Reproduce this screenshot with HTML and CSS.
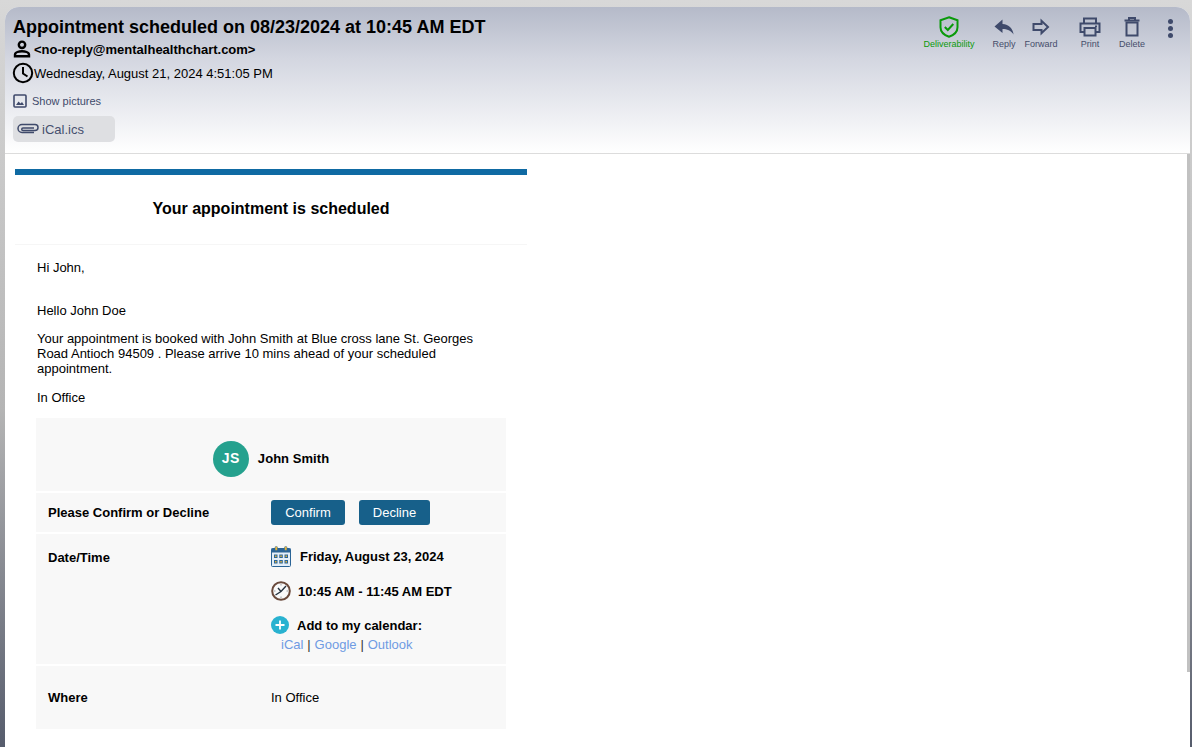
FILE: index.html
```html
<!DOCTYPE html>
<html lang="en">
<head>
<meta charset="utf-8">
<title>Appointment scheduled</title>
<link rel="stylesheet" href="styles.css">
</head>
<body>
<div class="window">
  <header class="head">
    <div class="meta">
      <h1 class="subject">Appointment scheduled on 08/23/2024 at 10:45 AM EDT</h1>
      <div class="sender">
        <svg viewBox="0 0 18 18" width="18" height="18"><circle cx="9" cy="4.800" r="3.200" fill="none" stroke="#000" stroke-width="2.400"/><path d="M2 16.300v-1.600c0-2.500 4.200-3.500 7-3.500s7 1 7 3.500v1.600z" fill="none" stroke="#000" stroke-width="2.400"/></svg>
        <span>&lt;no-reply@mentalhealthchart.com&gt;</span>
      </div>
      <div class="date">
        <svg viewBox="0 0 22 22" width="22" height="22"><circle cx="11" cy="11" r="9.200" fill="none" stroke="#000" stroke-width="2"/><path d="M11 5v6.500l4.500 3" fill="none" stroke="#000" stroke-width="2"/></svg>
        <span>Wednesday, August 21, 2024 4:51:05 PM</span>
      </div>
      <div class="pics">
        <svg viewBox="0 0 14 14" width="14" height="14"><rect x="1" y="1" width="12" height="12" rx="1" fill="none" stroke="#3f4a6b" stroke-width="1.600"/><path d="M3 11l2.500-3.500 2 2 1.500-1.500 2 3z" fill="#3f4a6b"/></svg>
        <span>Show pictures</span>
      </div>
      <div class="attach">
        <svg viewBox="0 0 24 12" width="24" height="12"><path d="M18 9.500H6a3.500 3.500 0 0 1 0-8h13a3 3 0 0 1 0 6H7a1.200 1.200 0 0 1 0-2.500h11" fill="none" stroke="#3f4a6b" stroke-width="1.500"/></svg>
        <span>iCal.ics</span>
      </div>
    </div>
    <nav class="tools">
      <div class="tool tool-deliv">
        <svg viewBox="0 0 20 22" width="20" height="22"><path d="M10 1.200l8.500 3v7c0 4.500-3.500 7.800-8.500 9.600-5-1.800-8.500-5.100-8.500-9.600v-7z" fill="none" stroke="#0a9a0a" stroke-width="2"/><path d="M5.800 11l3 3 5.500-6" fill="none" stroke="#0a9a0a" stroke-width="2"/></svg>
        <span>Deliverability</span>
      </div>
      <div class="tool tool-reply">
        <svg viewBox="0 0 20 16" width="20" height="16"><path d="M8.500 .5L.5 7.500 8.500 14V10c4.500 0 8.500 1.500 11 5.500-.5-6-4.500-10-11-10.500z" fill="#3f4a6b"/></svg>
        <span>Reply</span>
      </div>
      <div class="tool tool-fwd">
        <svg viewBox="0 0 18 16" width="18" height="16"><path d="M1.500 5h8V1.800L16 8l-6.500 6.200V11h-8z" fill="none" stroke="#3f4a6b" stroke-width="2"/></svg>
        <span>Forward</span>
      </div>
      <div class="tool tool-print">
        <svg viewBox="0 0 22 20" width="22" height="20"><path d="M5 6V1.500h12V6M5 15H1.500V6.500h19V15H17" fill="none" stroke="#3f4a6b" stroke-width="2"/><rect x="5.500" y="11" width="11" height="7.500" fill="none" stroke="#3f4a6b" stroke-width="2"/><rect x="16" y="8.500" width="2" height="1.500" fill="#3f4a6b"/></svg>
        <span>Print</span>
      </div>
      <div class="tool tool-del">
        <svg viewBox="0 0 16 20" width="16" height="20"><path d="M0.500 3.500h15M5 3V1h6v2" fill="none" stroke="#3f4a6b" stroke-width="2"/><rect x="2.500" y="5.500" width="11" height="13" fill="none" stroke="#3f4a6b" stroke-width="2"/></svg>
        <span>Delete</span>
      </div>
      <div class="more"><i></i><i></i><i></i></div>
    </nav>
  </header>

  <main class="body">
    <div class="thumb"></div>
    <article class="mail">
      <div class="mail-bar"></div>
      <h2 class="mail-title">Your appointment is scheduled</h2>
      <div class="mail-main">
        <p class="hi">Hi John,</p>
        <p class="hello">Hello John Doe</p>
        <p class="para">Your appointment is booked with John Smith at Blue cross lane St. Georges Road Antioch 94509 . Please arrive 10 mins ahead of your scheduled appointment.</p>
        <p class="kind">In Office</p>
        <div class="card">
          <div class="row row-person">
            <span class="avatar">JS</span>
            <strong class="person">John Smith</strong>
          </div>
          <div class="row row-split row-confirm">
            <strong class="label">Please Confirm or Decline</strong>
            <div class="value btns"><a class="btn btn-a">Confirm</a><a class="btn btn-b">Decline</a></div>
          </div>
          <div class="row row-split row-date">
            <strong class="label">Date/Time</strong>
            <div class="value">
              <div class="line line-day">
                <svg viewBox="0 0 20 21" width="20" height="21"><rect x="0.500" y="2.500" width="19" height="18" rx="1" fill="#e4eef7" stroke="#2a6496"/><rect x="0.500" y="2.500" width="19" height="4" fill="#2a6496"/><rect x="4" y="0.500" width="2.500" height="4" rx="1" fill="#e2b33c" stroke="#2a6496" stroke-width="0.500"/><rect x="13.500" y="0.500" width="2.500" height="4" rx="1" fill="#e2b33c" stroke="#2a6496" stroke-width="0.500"/><path d="M3 8.500h3.500V12H3zM8.300 8.500h3.500V12H8.300zM13.500 8.500H17V12h-3.500zM3 14h3.500v3.500H3zM8.300 14h3.500v3.500H8.300zM13.500 14H17v3.500h-3.500z" fill="#2a6496"/><path d="M4 9.500h1.500V11H4zM9.300 9.500h1.500V11H9.300zM14.500 9.500H16V11h-1.500zM4 15h1.500v1.500H4zM9.300 15h1.500v1.500H9.300zM14.500 15H16v1.500h-1.500z" fill="#e2b33c"/></svg>
                <strong>Friday, August 23, 2024</strong>
              </div>
              <div class="line line-time">
                <svg viewBox="0 0 20 20" width="20" height="20"><circle cx="10" cy="10" r="8.800" fill="#fafafa" stroke="#6a4a3c" stroke-width="2"/><path d="M10 3v1.500M10 15.500V17M3 10h1.500M15.500 10H17" stroke="#9aa0a6" stroke-width="1"/><path d="M4.500 14L10 10.500 15 5M10 10.500L7 7" fill="none" stroke="#263340" stroke-width="1.400"/></svg>
                <strong>10:45 AM - 11:45 AM EDT</strong>
              </div>
              <div class="line line-add">
                <svg viewBox="0 0 18 18" width="18" height="18"><circle cx="9" cy="9" r="9" fill="#29b2d0"/><path d="M9 4.500v9M4.500 9h9" stroke="#fff" stroke-width="1.800"/></svg>
                <strong>Add to my calendar:</strong>
              </div>
              <div class="links"><a>iCal</a> | <a>Google</a> | <a>Outlook</a></div>
            </div>
          </div>
          <div class="row row-split row-where">
            <strong class="label">Where</strong>
            <div class="value">In Office</div>
          </div>
        </div>
      </div>
    </article>
  </main>
</div>
</body>
</html>
```
FILE: styles.css
```css
* { box-sizing: border-box; }
html, body { height: 100%; margin: 0; }
body {
  padding: 7px 2px 0 5px;
  overflow: hidden;
  background: linear-gradient(180deg, #d8d8d8 0%, #b4b4b4 55%, #565c6c 100%);
  font-family: "Liberation Sans", Arial, sans-serif;
  color: #000;
}
.window {
  height: 100%;
  background: #fff;
  border-radius: 14px 14px 0 0;
  overflow: hidden;
  display: flex;
  flex-direction: column;
}
.head {
  height: 147px;
  flex: none;
  display: flex;
  justify-content: space-between;
  padding: 10px 0 0 8px;
  background: linear-gradient(180deg, #b5bac9 0%, #d3d6e0 35%, #ffffff 100%);
  border-bottom: 1px solid #dcdcdc;
}
.subject { margin: 0; font-size: 18px; line-height: 21px; font-weight: 700; }
.sender { display: flex; align-items: center; gap: 3px; height: 20px; margin-top: 1px; font-size: 13px; font-weight: 700; }
.date { display: flex; align-items: center; gap: 0; height: 24px; margin-top: 2px; margin-left: -1px; font-size: 13px; }
.pics { display: flex; align-items: center; gap: 5px; height: 16px; margin-top: 8px; font-size: 11px; color: #3f4a6b; }
.attach { display: flex; align-items: center; gap: 2px; width: 102px; height: 26px; margin-top: 7px; padding-left: 3px; background: #dedfe2; border-radius: 5px; font-size: 13px; color: #46506e; }

.tools { display: flex; align-items: flex-start; margin-top: -1px; }
.tool { display: flex; flex-direction: column; align-items: center; font-size: 9px; line-height: 11px; color: #454d6a; height: 34px; }
.tool svg { display: block; height: 22px; margin-bottom: 1px; }
.tool-deliv { width: 52px; margin-right: 14px; color: #0a9a0a; }
.tool-reply { width: 30px; margin-right: 4px; }
.tool-fwd { width: 36px; margin-right: 16px; }
.tool-print { width: 30px; margin-right: 12px; }
.tool-del { width: 30px; margin-right: 21px; }
.more { display: flex; flex-direction: column; gap: 2px; padding-top: 3px; margin-right: 17px; }
.more i { display: block; width: 5px; height: 5px; border-radius: 50%; background: #3f4a6b; }

.body { position: relative; flex: 1; overflow: hidden; padding: 15px 0 0 10px; }
.thumb { position: absolute; top: 0; right: 0; width: 3px; height: 518px; background: #c1c1c1; }
.mail { width: 512px; }
.mail-bar { height: 6px; background: #0f6aa3; }
.mail-title { margin: 0; height: 70px; border-bottom: 1px solid #f6f6f6; text-align: center; font-size: 16px; line-height: 67px; font-weight: 700; }
.mail-main { padding: 0 21px 0 21px; font-size: 13px; line-height: 15px; }
.mail-main p { margin: 0; padding-left: 1px; }
.mail-main .hi { padding-top: 15px; }
.mail-main .hello { padding-top: 28px; }
.mail-main .para { padding-top: 13px; max-width: 460px; }
.mail-main .kind { padding-top: 14px; }
.card { margin-top: 13px; display: flex; flex-direction: column; gap: 2px; }
.row { background: #f8f8f8; }
.row-person { height: 73px; display: flex; align-items: center; justify-content: center; gap: 9px; padding-top: 8px; }
.avatar { width: 36px; height: 36px; border-radius: 50%; background: #25a18e; color: #fff; font-size: 14px; font-weight: 700; letter-spacing: .5px; display: flex; align-items: center; justify-content: center; }
.person { letter-spacing: .05px; }
.row-split { display: flex; padding-left: 12px; }
.label { width: 223px; flex: none; }
.row-confirm { height: 39px; align-items: center; }
.btns { display: flex; gap: 14px; }
.btn { display: block; height: 25px; line-height: 25px; border-radius: 3px; background: #17608a; color: #fff; text-align: center; }
.btn-a { width: 74px; }
.btn-b { width: 71px; }
.row-date { height: 130px; padding-top: 16px; }
.line { display: flex; align-items: center; height: 20px; }
.line-day { gap: 9px; margin-top: -4px; }
.line-time { gap: 7px; margin-top: 15px; }
.line-add { gap: 8px; margin-top: 14px; }
.links { padding-left: 10px; margin-top: 2px; color: #333; word-spacing: .3px; }
.links a { color: #6f9be3; }
.row-where { height: 63px; align-items: center; padding-bottom: 1px; }
```
